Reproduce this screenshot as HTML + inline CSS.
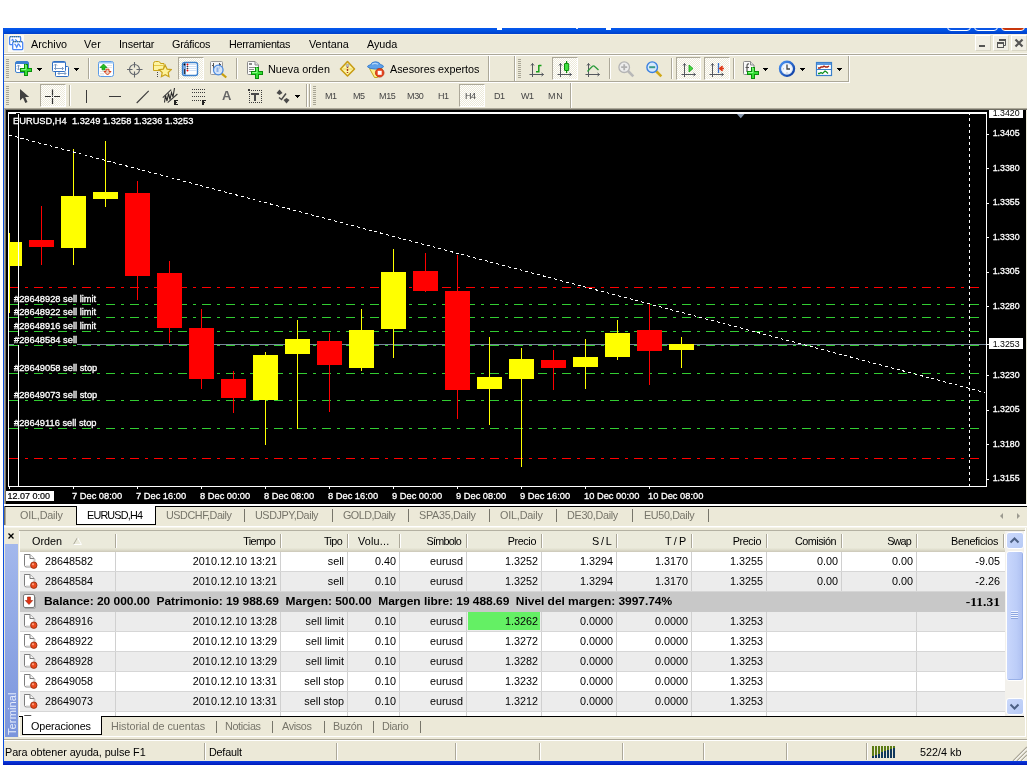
<!DOCTYPE html>
<html lang="es"><head><meta charset="utf-8"><title>MetaTrader 4 - EURUSD,H4</title>
<style>
html,body{margin:0;padding:0;background:#fff;}
body{width:1032px;height:765px;position:relative;overflow:hidden;font-family:"Liberation Sans",sans-serif;font-size:11px;color:#000;}
.a{position:absolute;}
.t{position:absolute;white-space:nowrap;line-height:13px;height:13px;font-size:11.5px;transform:scaleX(0.94);transform-origin:0 50%;}
#win{position:absolute;left:3px;top:28px;width:1024px;height:737px;background:#ece9d8;}
.sepv{position:absolute;width:1px;background:#aca899;border-right:1px solid #fff;}
.grip{position:absolute;width:3px;background:repeating-linear-gradient(to bottom,#a8a595 0,#a8a595 1px,#ece9d8 1px,#ece9d8 2px);}
.pressed{position:absolute;box-sizing:border-box;border:1px solid;border-color:#aca899 #fff #fff #aca899;background:#f6f5ee;}
.dd{position:absolute;width:0;height:0;border-left:3px solid transparent;border-right:3px solid transparent;border-top:3px solid #000;}
.tf{position:absolute;top:90px;font-size:9.5px;color:#444;line-height:12px;white-space:nowrap;transform:scaleX(0.947);transform-origin:0 50%;}
.ctab{position:absolute;top:509px;font-size:11.5px;transform:scaleX(0.94);transform-origin:0 50%;color:#77756a;line-height:13px;white-space:nowrap;}
.csep{position:absolute;top:509px;width:1px;height:13px;background:#77756a;}
.hd{position:absolute;top:535px;line-height:13px;white-space:nowrap;text-align:right;font-size:11.5px;transform:scaleX(0.94);transform-origin:100% 50%;}
.l{text-align:left !important;transform-origin:0 50% !important;}
.c{position:absolute;line-height:13px;white-space:nowrap;text-align:right;font-size:11.5px;transform:scaleX(0.94);transform-origin:100% 50%;}
.row{position:absolute;left:20px;width:985px;height:19px;border-bottom:1px solid #d4d4d4;}
.vl{position:absolute;width:1px;background:#d0d0d0;}
.btab{position:absolute;top:720px;font-size:11.5px;transform:scaleX(0.94);transform-origin:0 50%;color:#77756a;line-height:13px;white-space:nowrap;}
.bsep{position:absolute;top:721px;width:1px;height:12px;background:#77756a;}
.ssep{position:absolute;top:743px;width:1px;height:17px;background:#aca899;border-right:1px solid #fff;}
</style></head><body>
<div id="root" style="position:absolute;left:0;top:0;width:1032px;height:765px;will-change:transform;">
<div id="win"></div>
<div class="a" style="left:3px;top:28px;width:1024px;height:6px;background:linear-gradient(to bottom,#0558ee 0,#0050e0 50%,#003fca 100%);"></div>
<div class="a" style="left:3px;top:28px;width:1px;height:737px;background:#0a4fe0;"></div>
<div class="a" style="left:3px;top:761px;width:1024px;height:4px;background:linear-gradient(to bottom,#0a3ce0 0,#0019b8 100%);"></div>
<div class="a" style="left:947px;top:23px;width:24px;height:8px;border:1px solid #fff;border-radius:0 0 4px 4px;background:#0a55e4;box-sizing:border-box;"></div>
<div class="a" style="left:974px;top:23px;width:24px;height:8px;border:1px solid #fff;border-radius:0 0 4px 4px;background:#0a55e4;box-sizing:border-box;"></div>
<div class="a" style="left:1001px;top:23px;width:24px;height:8px;border:1px solid #fff;border-radius:0 0 4px 4px;background:#c8360c;box-sizing:border-box;"></div>
<div class="a" style="left:0;top:0;width:1032px;height:28px;background:#fff;"></div>
<div class="a" style="left:497px;top:28px;width:5px;height:2px;background:#fff;"></div>
<div class="a" style="left:606px;top:28px;width:5px;height:2px;background:#fff;"></div>
<div class="a" style="left:576px;top:28px;width:2px;height:1px;background:#dfe8fb;"></div>
<div class="a" style="left:4px;top:34px;width:1023px;height:1px;background:#f6f2e2;"></div>
<svg class="a" style="left:8px;top:35px" width="16" height="17" viewBox="0 0 16 17"><rect x="0" y="0" width="16" height="17" fill="#fafaf8"/><rect x="1.600" y="1.700" width="11" height="8" rx="1" fill="#fff" stroke="#4a86f4" stroke-width="1.300"/><path d="M2 1.700h10.500" stroke="#4a7a6a" stroke-width="1.300" stroke-dasharray="1 1"/><path d="M3.500 5.500l1.200-1 0.800 1.500M7 4.500l1.500 1 1 1.500" fill="none" stroke="#4a86f4" stroke-width="1.200"/><rect x="4.700" y="6.700" width="10" height="8" rx="1" fill="#fff" stroke="#4a86f4" stroke-width="1.300"/><path d="M5 6.700h9.500" stroke="#4a7a6a" stroke-width="1.300" stroke-dasharray="1 1"/><path d="M6.500 8.800l1 1 1.200 2.500 1.500-3.300 1.200 1 1.200 2.300" fill="none" stroke="#4a86f4" stroke-width="1.200"/></svg>
<div class="t" style="left:31px;top:38px;letter-spacing:0px;">Archivo</div>
<div class="t" style="left:84px;top:38px;letter-spacing:0.3px;">Ver</div>
<div class="t" style="left:119px;top:38px;letter-spacing:-0.19px;">Insertar</div>
<div class="t" style="left:172px;top:38px;letter-spacing:-0.27px;">Gráficos</div>
<div class="t" style="left:229px;top:38px;letter-spacing:-0.34px;">Herramientas</div>
<div class="t" style="left:309px;top:38px;letter-spacing:0px;">Ventana</div>
<div class="t" style="left:367px;top:38px;letter-spacing:-0.06px;">Ayuda</div>
<div class="a" style="left:975px;top:35px;width:16px;height:16px;box-sizing:border-box;border:1px solid;border-color:#fff #d8d5c4 #d8d5c4 #fff;background:#f0eee4;"></div>
<div class="a" style="left:993px;top:35px;width:16px;height:16px;box-sizing:border-box;border:1px solid;border-color:#fff #d8d5c4 #d8d5c4 #fff;background:#f0eee4;"></div>
<div class="a" style="left:1011px;top:35px;width:16px;height:16px;box-sizing:border-box;border:1px solid;border-color:#fff #d8d5c4 #d8d5c4 #fff;background:#f0eee4;"></div>
<div class="a" style="left:979px;top:45px;width:6px;height:2px;background:#555;"></div>
<svg class="a" style="left:993px;top:35px" width="16" height="16"><path d="M6.5 5.5h6v5h-2" fill="none" stroke="#555" stroke-width="1"/><rect x="6" y="4" width="7" height="2" fill="#555"/><rect x="4.500" y="8.5" width="6" height="4" fill="none" stroke="#555"/><rect x="4" y="7" width="7" height="2" fill="#555"/></svg>
<svg class="a" style="left:1011px;top:35px" width="16" height="16"><path d="M4.5 4.5l7 7M11.500 4.500l-7 7" stroke="#555" stroke-width="2.2"/></svg>
<div class="a" style="left:4px;top:54px;width:1023px;height:1px;background:#aca899;"></div>
<div class="a" style="left:4px;top:55px;width:1023px;height:1px;background:#fff;"></div>
<div class="a" style="left:4px;top:53px;width:1023px;height:1px;background:#fbfaf6;"></div>
<div class="a" style="left:4px;top:81px;width:845px;height:1px;background:#aca899;"></div>
<div class="a" style="left:4px;top:82px;width:846px;height:1px;background:#fff;"></div>
<div class="a" style="left:848px;top:56px;width:1px;height:26px;background:#aca899;"></div><div class="a" style="left:849px;top:56px;width:1px;height:27px;background:#fff;"></div>
<div class="grip" style="left:6px;top:59px;height:19px;"></div><svg class="a" style="left:14px;top:60px" width="20" height="18" viewBox="0 0 20 18"><rect x="1.5" y="1.5" width="13" height="11" rx="1.5" fill="#fff" stroke="#3b7fd0"/><rect x="2" y="2" width="12" height="2" fill="#3b7fd0"/><path d="M4.500 5v5M3 6.500l1.500-1.500 1.500 1.500M3 8.500l1.500 1.500 1.500-1.500" stroke="#7d9cc4" fill="none"/><path d="M10 4h4v4h4v4h-4v4h-4v-4h-4v-4h4z" fill="#0b8f0b"/><path d="M11 5h2v4h4v2h-4v4h-2v-4h-4v-2h4z" fill="#35dd35"/><path d="M11 5h1v4.500h-4.500v0.500" fill="none" stroke="#8cff8c" stroke-width="1"/></svg>
<svg class="a" style="left:37px;top:68px" width="5" height="3" shape-rendering="crispEdges"><rect x="0" y="0" width="5" height="1"/><rect x="1" y="1" width="3" height="1"/><rect x="2" y="2" width="1" height="1"/></svg><svg class="a" style="left:51px;top:60px" width="20" height="18" viewBox="0 0 20 18"><rect x="4.500" y="6.500" width="13" height="10" rx="1" fill="#fff" stroke="#2f6fc4"/><path d="M7 13.500h8M7 13.500l1.500-1.500M7 13.500l1.500 1.500M15 13.500l-1.500-1.500M15 13.500l-1.500 1.500" stroke="#7d9cc4" fill="none"/><rect x="1.500" y="1.500" width="13" height="10" rx="1" fill="#fff" stroke="#2f6fc4"/><rect x="2" y="2" width="12" height="0.800" fill="#2f6fc4"/><path d="M4.500 4v6M3 5.500l1.500-1.500 1.500 1.500M3 8.500h9.500M12.500 8.500l-1.500-1.500M12.500 8.500l-1.500 1.500" stroke="#7d9cc4" fill="none"/></svg>
<svg class="a" style="left:74px;top:68px" width="5" height="3" shape-rendering="crispEdges"><rect x="0" y="0" width="5" height="1"/><rect x="1" y="1" width="3" height="1"/><rect x="2" y="2" width="1" height="1"/></svg><div class="a" style="left:88px;top:58px;width:1px;height:21px;background:#aca899;"></div><div class="a" style="left:89px;top:58px;width:1px;height:21px;background:#fff;"></div>
<svg class="a" style="left:97px;top:60px" width="18" height="18" viewBox="0 0 18 18"><rect x="1.500" y="1.500" width="15" height="15" rx="2" fill="#fff" stroke="#5b9be6"/><rect x="2" y="2" width="14" height="1.500" fill="#9cc8f6"/><path d="M10 5.500h5M10 7.500h5M3 11.500h4M3 13.500h4M3 15h4" stroke="#e4e4e4"/><path d="M6.500 4l3.500 3.500h-2v2.300h-3v-2.300h-2z" fill="#22c022" stroke="#0c8a0c" stroke-width="0.700"/><path d="M10.500 15l-3.500-3.500h2v-2.300h3v2.300h2z" fill="#e8d0c0" stroke="#d8401c" stroke-width="1"/></svg>
<svg class="a" style="left:126px;top:61px" width="18" height="18" viewBox="0 0 18 18"><circle cx="8.500" cy="8.500" r="5" fill="none" stroke="#62666c" stroke-width="1.100"/><path d="M8.500 1v5.500M8.500 10.500v6M1 8.500h5.500M10.500 8.500h6" stroke="#62666c" stroke-width="1.100"/></svg>
<svg class="a" style="left:152px;top:60px" width="20" height="18" viewBox="0 0 20 18"><path d="M1.500 3.500q0-2 2-2h3q1.500 0 2 2h3.500v7h-10.500z" fill="#fdf3a2" stroke="#c9a21a"/><path d="M2 5.500h9.500" stroke="#e6c84a"/><path d="M5.500 12v1M5.500 14v1M5.500 16v1" stroke="#444"/><path d="M13.200 5.200l1.900 3.900 4.200 0.500-3.100 2.900 0.800 4.200-3.800-2.100-3.800 2.100 0.800-4.200-3.100-2.900 4.200-0.500z" fill="#fdf29a" stroke="#c9a21a" stroke-width="1.200"/></svg>
<div class="pressed" style="left:178px;top:57px;width:26px;height:23px;background-image:repeating-conic-gradient(#fff 0 25%,#ece9d8 0 50%);background-size:2px 2px;"></div>
<svg class="a" style="left:181px;top:61px" width="18" height="16" viewBox="0 0 18 16"><rect x="1.500" y="1.500" width="15" height="13" rx="2" fill="#fff" stroke="#3b80cc" stroke-width="1.400"/><rect x="2" y="2" width="3" height="12" fill="#7aa7e0"/><rect x="3" y="8" width="1.200" height="5" fill="#333"/><path d="M5 3.500h11M5 5.500h11M5 7.500h11M5 9.500h11" stroke="#cfe0f6"/><circle cx="3.500" cy="3.500" r="0.900" fill="#000"/><circle cx="6.500" cy="3.500" r="0.900" fill="#f00"/><circle cx="6.500" cy="5.500" r="0.800" fill="#333"/><circle cx="6.500" cy="7.500" r="0.800" fill="#333"/><circle cx="6.500" cy="9.500" r="0.900" fill="#f00"/></svg>
<svg class="a" style="left:209px;top:60px" width="20" height="19" viewBox="0 0 20 19"><rect x="1.500" y="1.500" width="12" height="13" rx="1" fill="#f4f4f4" stroke="#9a9a9a"/><path d="M4.500 3v7M3 5.500h1.500M10.500 3v6M10.500 4.500h1.500" stroke="#555"/><circle cx="9.300" cy="10" r="4.800" fill="#cfe0f8" fill-opacity="0.850" stroke="#4a8ae0" stroke-width="1.200"/><path d="M8.500 7.500v4.500" stroke="#8ab0e8" stroke-width="2"/><path d="M13 13.800l4.300 3.700" stroke="#c8a010" stroke-width="2.200"/></svg>
<div class="a" style="left:236px;top:58px;width:1px;height:21px;background:#aca899;"></div><div class="a" style="left:237px;top:58px;width:1px;height:21px;background:#fff;"></div>
<svg class="a" style="left:246px;top:60px" width="19" height="20" viewBox="0 0 19 20"><path d="M1.500 2.500q0-1 1-1h6.500l3.500 3.500v8.500q0 1-1 1h-9q-1 0-1-1z" fill="#fafafa" stroke="#8a8a8a"/><path d="M9 1.500v3.500h3.500" fill="#e0e0e0" stroke="#8a8a8a"/><rect x="3" y="3" width="3" height="2" fill="#8a8a8a"/><path d="M3 7.500h7M3 9.500h5M3 11.500h3" stroke="#8a8a8a"/><path d="M9 7h4v4h4v4h-4v4h-4v-4h-4v-4h4z" fill="#0b8f0b"/><path d="M10 8h2v4h4v2h-4v4h-2v-4h-4v-2h4z" fill="#35dd35"/><path d="M10 8h1v4.500h-4.500v0.500" fill="none" stroke="#8cff8c" stroke-width="1"/></svg>
<div class="t" style="left:268px;top:63px;">Nueva orden</div>
<svg class="a" style="left:339px;top:60px" width="18" height="18" viewBox="0 0 18 18"><path d="M8.500 1.500l7 7.500-7 7-7-7z" fill="#fdf6a6" stroke="#c89c14" stroke-width="1.600" stroke-linejoin="round"/><path d="M3.500 9h10" stroke="#e8d060"/><path d="M8.500 6v7" stroke="#a8301c" stroke-width="1.400" stroke-dasharray="2 1"/><circle cx="8.500" cy="5.500" r="1.400" fill="#c0c0c0" stroke="#888" stroke-width="0.500"/></svg>
<svg class="a" style="left:366px;top:59px" width="19" height="20" viewBox="0 0 19 20"><path d="M3.500 9.500h12.500v4l-4.500 5h-3z" fill="#fdf08a" stroke="#c9a21a"/><g transform="translate(0,0.800)"><path d="M1.500 7q0-1.500 3-2q1-3 5-3t5 2.800q3 0.500 3 2.200q-2 2.300-8 2.300t-8-2.300z" fill="#5ea2ea" stroke="#3a7fd0"/><path d="M6 4.500q3-1.800 6 0" stroke="#b4d6fa" stroke-width="1.300" fill="none"/></g><circle cx="13.700" cy="13.800" r="4.300" fill="#e8431c" stroke="#b83010" stroke-width="0.800"/><rect x="11.700" y="11.800" width="4" height="4" fill="#fff"/></svg>
<div class="t" style="left:390px;top:63px;">Asesores expertos</div>
<div class="a" style="left:488px;top:56px;width:1px;height:25px;background:#aca899;"></div><div class="a" style="left:489px;top:56px;width:1px;height:25px;background:#fff;"></div>
<div class="a" style="left:514px;top:56px;width:1px;height:25px;background:#aca899;"></div><div class="a" style="left:515px;top:56px;width:1px;height:25px;background:#fff;"></div>
<div class="grip" style="left:518px;top:59px;height:19px;"></div><svg class="a" style="left:527px;top:60px" width="20" height="19" viewBox="0 0 20 19"><path d="M5.5 3.500v13.500M4 5.500l1.500-2 1.500 2M2.5 14.500h14M14.5 13l2 1.500-2 1.500" stroke="#55585e" stroke-width="1" fill="none"/><path d="M11.800 5v7.500M11.800 5.500h2.700M9 11.800h2.800" stroke="#18a018" stroke-width="1.500" fill="none"/></svg>
<div class="pressed" style="left:552px;top:57px;width:26px;height:23px;background-image:repeating-conic-gradient(#fff 0 25%,#ece9d8 0 50%);background-size:2px 2px;"></div>
<svg class="a" style="left:555px;top:60px" width="20" height="19" viewBox="0 0 20 19"><path d="M5.5 3.500v13.500M4 5.500l1.500-2 1.500 2M2.5 14.500h14M14.5 13l2 1.500-2 1.500" stroke="#55585e" stroke-width="1" fill="none"/><path d="M11.600 1v12" stroke="#0c8c0c" stroke-width="1.200"/><rect x="9.500" y="3.500" width="4.200" height="7" rx="0.500" fill="#3fe03f" stroke="#0c8c0c"/></svg>
<svg class="a" style="left:583px;top:60px" width="20" height="19" viewBox="0 0 20 19"><path d="M5.5 3.500v13.500M4 5.500l1.500-2 1.500 2M2.5 14.500h14M14.5 13l2 1.500-2 1.500" stroke="#55585e" stroke-width="1" fill="none"/><path d="M4.500 11.500q3-3.500 5-5.300q1.200-0.800 2.500 0.500l3.500 3.300" stroke="#2a9a3a" stroke-width="1.300" fill="none"/></svg>
<div class="a" style="left:609px;top:58px;width:1px;height:21px;background:#aca899;"></div><div class="a" style="left:610px;top:58px;width:1px;height:21px;background:#fff;"></div>
<svg class="a" style="left:617px;top:60px" width="19" height="19" viewBox="0 0 19 19"><path d="M11 11l5.300 5.300" stroke="#b8b8b8" stroke-width="2.600"/><circle cx="7.200" cy="7.200" r="5.300" fill="#ececec" stroke="#b4b4b4" stroke-width="1.300"/><path d="M7.200 4.200v6M4.200 7.200h6" stroke="#b0b0b0" stroke-width="1.800"/></svg>
<svg class="a" style="left:645px;top:60px" width="19" height="19" viewBox="0 0 19 19"><path d="M11 11l5.300 5.300" stroke="#d0a818" stroke-width="2.600"/><circle cx="7.200" cy="7.200" r="5.300" fill="#d6e8fc" stroke="#3a80e0" stroke-width="1.400"/><path d="M4.200 7.200h6" stroke="#3a9a8a" stroke-width="2"/></svg>
<div class="a" style="left:671px;top:58px;width:1px;height:21px;background:#aca899;"></div><div class="a" style="left:672px;top:58px;width:1px;height:21px;background:#fff;"></div>
<div class="pressed" style="left:676px;top:57px;width:25px;height:23px;background-image:repeating-conic-gradient(#fff 0 25%,#ece9d8 0 50%);background-size:2px 2px;"></div>
<svg class="a" style="left:679px;top:60px" width="20" height="19" viewBox="0 0 20 19"><path d="M5.5 3.500v13.500M4 5.500l1.500-2 1.500 2M2.5 14.500h14M14.5 13l2 1.500-2 1.500" stroke="#55585e" stroke-width="1" fill="none"/><path d="M10 5l4 3.500-4 3.500z" fill="#3fd83f" stroke="#18a018" stroke-width="0.800"/></svg>
<div class="pressed" style="left:704px;top:57px;width:26px;height:23px;background-image:repeating-conic-gradient(#fff 0 25%,#ece9d8 0 50%);background-size:2px 2px;"></div>
<svg class="a" style="left:707px;top:60px" width="20" height="19" viewBox="0 0 20 19"><path d="M5.5 3.500v13.500M4 5.500l1.500-2 1.500 2M2.5 14.500h14M14.5 13l2 1.500-2 1.500" stroke="#55585e" stroke-width="1" fill="none"/><path d="M11.500 3v10" stroke="#3a6fc8" stroke-width="1.300"/><path d="M17 8.500h-4M15.500 6l-3 2.500 3 2.500" stroke="#e03818" stroke-width="1.300" fill="#e03818"/></svg>
<div class="a" style="left:733px;top:58px;width:1px;height:21px;background:#aca899;"></div><div class="a" style="left:734px;top:58px;width:1px;height:21px;background:#fff;"></div>
<svg class="a" style="left:742px;top:60px" width="19" height="20" viewBox="0 0 19 20"><path d="M1.500 2.500q0-1 1-1h6l3.500 3.500v8.500q0 1-1 1h-8.500q-1 0-1-1z" fill="#fafafa" stroke="#8a8a8a"/><path d="M8.500 1.500v3.500h3.500" fill="#e0e0e0" stroke="#8a8a8a"/><path d="M7 4q-2-0.500-2 2v6M3.500 7.500h3.500" stroke="#555" stroke-width="1.200" fill="none"/><path d="M9 7h4v4h4v4h-4v4h-4v-4h-4v-4h4z" fill="#0b8f0b"/><path d="M10 8h2v4h4v2h-4v4h-2v-4h-4v-2h4z" fill="#35dd35"/><path d="M10 8h1v4.500h-4.500v0.500" fill="none" stroke="#8cff8c" stroke-width="1"/></svg>
<svg class="a" style="left:763px;top:68px" width="5" height="3" shape-rendering="crispEdges"><rect x="0" y="0" width="5" height="1"/><rect x="1" y="1" width="3" height="1"/><rect x="2" y="2" width="1" height="1"/></svg><svg class="a" style="left:778px;top:60px" width="18" height="18" viewBox="0 0 18 18"><defs><linearGradient id="ck" x1="0" y1="0" x2="1" y2="1"><stop offset="0" stop-color="#4a94f4"/><stop offset="1" stop-color="#0a3aa0"/></linearGradient></defs><circle cx="9" cy="8.800" r="7" fill="#fff" stroke="url(#ck)" stroke-width="2.400"/><circle cx="9" cy="8.800" r="5.300" fill="#f4f8fe" stroke="#c8d8ee" stroke-width="0.600"/><path d="M9 4.500v4.500h3" stroke="#444" stroke-width="1.300" fill="none"/><path d="M9 12.500v0.800M5 8.800h0.800" stroke="#999"/></svg>
<svg class="a" style="left:800px;top:68px" width="5" height="3" shape-rendering="crispEdges"><rect x="0" y="0" width="5" height="1"/><rect x="1" y="1" width="3" height="1"/><rect x="2" y="2" width="1" height="1"/></svg><svg class="a" style="left:815px;top:61px" width="18" height="16" viewBox="0 0 18 16"><rect x="1.500" y="1.500" width="15" height="13" fill="#fff" stroke="#3b80cc" stroke-width="1.200"/><rect x="2" y="2" width="14" height="2" fill="#5b98e0"/><path d="M2 8.500h14" stroke="#3b80cc"/><path d="M3 7h2l1-1h2l1-1 1.500 1h2l1.500-1" stroke="#a82010" stroke-width="1.300" fill="none"/><path d="M3 12.500h1.500l1.500-1 1.500 1 2.500-2.500 1.500 1 1.500 1.500" stroke="#109020" stroke-width="1.300" fill="none"/></svg>
<svg class="a" style="left:837px;top:68px" width="5" height="3" shape-rendering="crispEdges"><rect x="0" y="0" width="5" height="1"/><rect x="1" y="1" width="3" height="1"/><rect x="2" y="2" width="1" height="1"/></svg><div class="grip" style="left:6px;top:86px;height:19px;"></div><svg class="a" style="left:19px;top:88px" width="11" height="16" viewBox="0 0 11 16"><path d="M1 1v11.500l3-2.800 2.300 5.300 2.200-1-2.300-5h4z" fill="#404040"/></svg>
<div class="pressed" style="left:40px;top:84px;width:26px;height:23px;background-image:repeating-conic-gradient(#fff 0 25%,#ece9d8 0 50%);background-size:2px 2px;"></div>
<svg class="a" style="left:44px;top:88px" width="18" height="18" viewBox="0 0 18 18"><path d="M8.500 1.500v6M8.500 10v6M1 8.500h6M10 8.500h6" stroke="#333" stroke-width="1.200"/><rect x="8" y="8" width="1" height="1" fill="#333"/></svg>
<div class="a" style="left:69px;top:85px;width:1px;height:21px;background:#aca899;"></div><div class="a" style="left:70px;top:85px;width:1px;height:21px;background:#fff;"></div>
<div class="a" style="left:86px;top:90px;width:1px;height:13px;background:#3a3a3a;"></div><div class="a" style="left:109px;top:96px;width:12px;height:1px;background:#3a3a3a;"></div>
<svg class="a" style="left:135px;top:89px" width="16" height="16" viewBox="0 0 16 16"><path d="M1.700 14l12-12.200" stroke="#3a3a3a" stroke-width="1.100"/></svg>
<svg class="a" style="left:161px;top:87px" width="19" height="19" viewBox="0 0 19 19"><path d="M1.800 10.600l8.400-7.900M6.700 15.700l9.700-8.700" stroke="#3a3a3a" stroke-width="1.100"/><path d="M3.500 15.500l1-7 1.500 5.500 1.500-7.500 1.500 6 1.500-7 1.500 4.500 1.500-9" stroke="#2a2a2a" stroke-width="1.100" fill="none"/><g shape-rendering="crispEdges" fill="#222"><rect x="13" y="13" width="1.500" height="5"/><rect x="13" y="13" width="4" height="1"/><rect x="13" y="15" width="3" height="1"/><rect x="13" y="17" width="4" height="1"/></g></svg>
<svg class="a" style="left:191px;top:87px" width="17" height="19" viewBox="0 0 17 19"><g shape-rendering="crispEdges" fill="#3a3a3a"><rect x="1" y="2" width="1" height="1"/><rect x="3" y="2" width="1" height="1"/><rect x="5" y="2" width="1" height="1"/><rect x="7" y="2" width="1" height="1"/><rect x="9" y="2" width="1" height="1"/><rect x="11" y="2" width="1" height="1"/><rect x="13" y="2" width="1" height="1"/><rect x="1" y="5" width="1" height="1"/><rect x="3" y="5" width="1" height="1"/><rect x="5" y="5" width="1" height="1"/><rect x="7" y="5" width="1" height="1"/><rect x="9" y="5" width="1" height="1"/><rect x="11" y="5" width="1" height="1"/><rect x="13" y="5" width="1" height="1"/><rect x="1" y="9" width="1" height="1"/><rect x="3" y="9" width="1" height="1"/><rect x="5" y="9" width="1" height="1"/><rect x="7" y="9" width="1" height="1"/><rect x="9" y="9" width="1" height="1"/><rect x="11" y="9" width="1" height="1"/><rect x="13" y="9" width="1" height="1"/><rect x="1" y="13" width="1" height="1"/><rect x="3" y="13" width="1" height="1"/><rect x="5" y="13" width="1" height="1"/><rect x="7" y="13" width="1" height="1"/><rect x="9" y="13" width="1" height="1"/></g><g shape-rendering="crispEdges" fill="#222"><rect x="11" y="13" width="1.500" height="5"/><rect x="11" y="13" width="4" height="1"/><rect x="11" y="15" width="3" height="1"/></g></svg>
<div class="a" style="left:222px;top:88px;font-size:13px;font-weight:bold;color:#666;line-height:15px;">A</div>
<svg class="a" style="left:247px;top:88px" width="16" height="16" viewBox="0 0 16 16"><g shape-rendering="crispEdges" fill="#3a3a3a"><rect x="2" y="2" width="1" height="1"/><rect x="2" y="14" width="1" height="1"/><rect x="2" y="2" width="1" height="1"/><rect x="14" y="2" width="1" height="1"/><rect x="4" y="2" width="1" height="1"/><rect x="4" y="14" width="1" height="1"/><rect x="2" y="4" width="1" height="1"/><rect x="14" y="4" width="1" height="1"/><rect x="6" y="2" width="1" height="1"/><rect x="6" y="14" width="1" height="1"/><rect x="2" y="6" width="1" height="1"/><rect x="14" y="6" width="1" height="1"/><rect x="8" y="2" width="1" height="1"/><rect x="8" y="14" width="1" height="1"/><rect x="2" y="8" width="1" height="1"/><rect x="14" y="8" width="1" height="1"/><rect x="10" y="2" width="1" height="1"/><rect x="10" y="14" width="1" height="1"/><rect x="2" y="10" width="1" height="1"/><rect x="14" y="10" width="1" height="1"/><rect x="12" y="2" width="1" height="1"/><rect x="12" y="14" width="1" height="1"/><rect x="2" y="12" width="1" height="1"/><rect x="14" y="12" width="1" height="1"/><rect x="14" y="2" width="1" height="1"/><rect x="14" y="14" width="1" height="1"/><rect x="2" y="14" width="1" height="1"/><rect x="14" y="14" width="1" height="1"/><rect x="1" y="1" width="2" height="2"/><rect x="4" y="5" width="8" height="2" fill="#4a4a4a"/><rect x="7" y="5" width="2" height="8" fill="#4a4a4a"/></g></svg>
<svg class="a" style="left:275px;top:88px" width="17" height="17" viewBox="0 0 17 17"><path d="M4.500 1.500l3 3.500h-6zM1.500 5h6l-3 2z" fill="#4a4a4a"/><path d="M11.500 15.500l3-3.500h-6zM8.500 12h6l-3-2z" fill="#4a4a4a"/><path d="M4 9.500l2.500 2 4.500-6" stroke="#4a4a4a" stroke-width="1.500" fill="none"/></svg>
<svg class="a" style="left:295px;top:95px" width="5" height="3" shape-rendering="crispEdges"><rect x="0" y="0" width="5" height="1"/><rect x="1" y="1" width="3" height="1"/><rect x="2" y="2" width="1" height="1"/></svg><div class="a" style="left:306px;top:84px;width:1px;height:23px;background:#aca899;"></div><div class="a" style="left:307px;top:84px;width:1px;height:23px;background:#fff;"></div><div class="a" style="left:309px;top:84px;width:1px;height:23px;background:#aca899;"></div><div class="a" style="left:310px;top:84px;width:1px;height:23px;background:#fff;"></div>
<div class="grip" style="left:313px;top:86px;height:19px;"></div><div class="pressed" style="left:459px;top:84px;width:26px;height:23px;background-image:repeating-conic-gradient(#fff 0 25%,#ece9d8 0 50%);background-size:2px 2px;"></div>
<div class="tf" style="left:325px;letter-spacing:-0.63px;">M1</div><div class="tf" style="left:353px;letter-spacing:-0.63px;">M5</div><div class="tf" style="left:379px;letter-spacing:-0.33px;">M15</div><div class="tf" style="left:407px;letter-spacing:-0.33px;">M30</div><div class="tf" style="left:438px;letter-spacing:-0.44px;">H1</div><div class="tf" style="left:465px;letter-spacing:-0.44px;">H4</div><div class="tf" style="left:494px;letter-spacing:-0.44px;">D1</div><div class="tf" style="left:521px;letter-spacing:-0.5px;">W1</div><div class="tf" style="left:548px;letter-spacing:0.7px;">MN</div>
<div class="a" style="left:570px;top:83px;width:1px;height:25px;background:#aca899;"></div><div class="a" style="left:571px;top:83px;width:1px;height:25px;background:#fff;"></div>
<div class="a" style="left:4px;top:108px;width:1023px;height:1px;background:#aca899;"></div>
<div class="a" style="left:4px;top:109px;width:1023px;height:1px;background:#716f64;"></div>
<div class="a" style="left:4px;top:108px;width:1px;height:397px;background:#aca899;"></div>
<div class="a" style="left:5px;top:109px;width:1px;height:396px;background:#716f64;"></div>
<svg class="a" style="left:6px;top:110px;" width="1020" height="394" viewBox="6 110 1020 394" shape-rendering="crispEdges" font-family="'Liberation Sans',sans-serif" font-size="9.3px">
<rect x="6" y="110" width="1020" height="394" fill="#000"/>
<rect x="9" y="287" width="9" height="1" fill="#ff0000"/><line x1="19" x2="979" y1="287.5" y2="287.5" stroke="#ff0000" stroke-width="1" stroke-dasharray="9 6 3 6" stroke-dashoffset="9"/>
<rect x="9" y="458" width="9" height="1" fill="#ff0000"/><line x1="19" x2="979" y1="458.5" y2="458.5" stroke="#ff0000" stroke-width="1" stroke-dasharray="9 6 3 6" stroke-dashoffset="9"/>
<rect x="9" y="304" width="9" height="1" fill="#32cd32"/><line x1="19" x2="979" y1="304.5" y2="304.5" stroke="#32cd32" stroke-width="1" stroke-dasharray="9 6 3 6" stroke-dashoffset="9"/>
<rect x="9" y="317" width="9" height="1" fill="#32cd32"/><line x1="19" x2="979" y1="317.5" y2="317.5" stroke="#32cd32" stroke-width="1" stroke-dasharray="9 6 3 6" stroke-dashoffset="9"/>
<rect x="9" y="331" width="9" height="1" fill="#32cd32"/><line x1="19" x2="979" y1="331.5" y2="331.5" stroke="#32cd32" stroke-width="1" stroke-dasharray="9 6 3 6" stroke-dashoffset="9"/>
<rect x="9" y="345" width="9" height="1" fill="#32cd32"/><line x1="19" x2="979" y1="345.5" y2="345.5" stroke="#32cd32" stroke-width="1" stroke-dasharray="9 6 3 6" stroke-dashoffset="9"/>
<rect x="9" y="373" width="9" height="1" fill="#32cd32"/><line x1="19" x2="979" y1="373.5" y2="373.5" stroke="#32cd32" stroke-width="1" stroke-dasharray="9 6 3 6" stroke-dashoffset="9"/>
<rect x="9" y="400" width="9" height="1" fill="#32cd32"/><line x1="19" x2="979" y1="400.5" y2="400.5" stroke="#32cd32" stroke-width="1" stroke-dasharray="9 6 3 6" stroke-dashoffset="9"/>
<rect x="9" y="428" width="9" height="1" fill="#32cd32"/><line x1="19" x2="979" y1="428.5" y2="428.5" stroke="#32cd32" stroke-width="1" stroke-dasharray="9 6 3 6" stroke-dashoffset="9"/>
<rect x="9" y="344" width="977" height="1" fill="#778899"/>
<rect x="9" y="233" width="1" height="80" fill="#ffff00"/><rect x="9" y="242" width="13" height="24" fill="#ffff00"/>
<rect x="41" y="206" width="1" height="59" fill="#ff0000"/><rect x="29" y="240" width="25" height="7" fill="#ff0000"/>
<rect x="73" y="149" width="1" height="116" fill="#ffff00"/><rect x="61" y="196" width="25" height="52" fill="#ffff00"/>
<rect x="105" y="141" width="1" height="66" fill="#ffff00"/><rect x="93" y="192" width="25" height="7" fill="#ffff00"/>
<rect x="137" y="181" width="1" height="119" fill="#ff0000"/><rect x="125" y="193" width="25" height="83" fill="#ff0000"/>
<rect x="169" y="261" width="1" height="82" fill="#ff0000"/><rect x="157" y="273" width="25" height="55" fill="#ff0000"/>
<rect x="201" y="309" width="1" height="80" fill="#ff0000"/><rect x="189" y="328" width="25" height="51" fill="#ff0000"/>
<rect x="233" y="371" width="1" height="42" fill="#ff0000"/><rect x="221" y="379" width="25" height="19" fill="#ff0000"/>
<rect x="265" y="352" width="1" height="93" fill="#ffff00"/><rect x="253" y="355" width="25" height="45" fill="#ffff00"/>
<rect x="297" y="320" width="1" height="109" fill="#ffff00"/><rect x="285" y="339" width="25" height="15" fill="#ffff00"/>
<rect x="329" y="333" width="1" height="79" fill="#ff0000"/><rect x="317" y="341" width="25" height="24" fill="#ff0000"/>
<rect x="361" y="309" width="1" height="62" fill="#ffff00"/><rect x="349" y="330" width="25" height="38" fill="#ffff00"/>
<rect x="393" y="249" width="1" height="109" fill="#ffff00"/><rect x="381" y="272" width="25" height="57" fill="#ffff00"/>
<rect x="425" y="253" width="1" height="39" fill="#ff0000"/><rect x="413" y="271" width="25" height="20" fill="#ff0000"/>
<rect x="457" y="255" width="1" height="164" fill="#ff0000"/><rect x="445" y="291" width="25" height="99" fill="#ff0000"/>
<rect x="489" y="337" width="1" height="88" fill="#ffff00"/><rect x="477" y="377" width="25" height="12" fill="#ffff00"/>
<rect x="521" y="348" width="1" height="119" fill="#ffff00"/><rect x="509" y="359" width="25" height="20" fill="#ffff00"/>
<rect x="553" y="350" width="1" height="40" fill="#ff0000"/><rect x="541" y="360" width="25" height="8" fill="#ff0000"/>
<rect x="585" y="339" width="1" height="50" fill="#ffff00"/><rect x="573" y="357" width="25" height="10" fill="#ffff00"/>
<rect x="617" y="320" width="1" height="40" fill="#ffff00"/><rect x="605" y="333" width="25" height="24" fill="#ffff00"/>
<rect x="649" y="304" width="1" height="81" fill="#ff0000"/><rect x="637" y="330" width="25" height="21" fill="#ff0000"/>
<rect x="681" y="337" width="1" height="31" fill="#ffff00"/><rect x="669" y="344" width="25" height="6" fill="#ffff00"/>
<line x1="9" y1="135" x2="985" y2="392.5" stroke="#fff" stroke-width="1" stroke-dasharray="3 3"/>
<rect x="8" y="112" width="979" height="2" fill="#fff"/>
<rect x="8" y="112" width="1" height="375" fill="#fff"/>
<rect x="986" y="112" width="1" height="375" fill="#fff"/>
<rect x="8" y="486" width="979" height="1" fill="#fff"/>
<rect x="18" y="114" width="1" height="373" fill="#fff"/>
<rect x="16" y="113" width="4" height="1" fill="#000"/>
<line x1="969.5" x2="969.5" y1="112" y2="486" stroke="#fff" stroke-width="1" stroke-dasharray="3 3"/>
<path d="M737 114h7.500l-3.750 4.200z" fill="#8494aa" shape-rendering="auto"/>
<rect x="9" y="486" width="1" height="3" fill="#fff"/><rect x="73" y="486" width="1" height="3" fill="#fff"/><rect x="137" y="486" width="1" height="3" fill="#fff"/><rect x="201" y="486" width="1" height="3" fill="#fff"/><rect x="265" y="486" width="1" height="3" fill="#fff"/><rect x="329" y="486" width="1" height="3" fill="#fff"/><rect x="393" y="486" width="1" height="3" fill="#fff"/><rect x="457" y="486" width="1" height="3" fill="#fff"/><rect x="521" y="486" width="1" height="3" fill="#fff"/><rect x="585" y="486" width="1" height="3" fill="#fff"/><rect x="649" y="486" width="1" height="3" fill="#fff"/>
<rect x="987" y="134" width="2" height="1" fill="#fff"/><text x="992.700" y="136.1" fill="#fff" stroke="#fff" stroke-width="0.3" font-size="8.800px">1.3405</text>
<rect x="987" y="168" width="2" height="1" fill="#fff"/><text x="992.700" y="170.6" fill="#fff" stroke="#fff" stroke-width="0.3" font-size="8.800px">1.3380</text>
<rect x="987" y="203" width="2" height="1" fill="#fff"/><text x="992.700" y="205.1" fill="#fff" stroke="#fff" stroke-width="0.3" font-size="8.800px">1.3355</text>
<rect x="987" y="237" width="2" height="1" fill="#fff"/><text x="992.700" y="239.6" fill="#fff" stroke="#fff" stroke-width="0.3" font-size="8.800px">1.3330</text>
<rect x="987" y="272" width="2" height="1" fill="#fff"/><text x="992.700" y="274.1" fill="#fff" stroke="#fff" stroke-width="0.3" font-size="8.800px">1.3305</text>
<rect x="987" y="306" width="2" height="1" fill="#fff"/><text x="992.700" y="308.6" fill="#fff" stroke="#fff" stroke-width="0.3" font-size="8.800px">1.3280</text>
<rect x="987" y="375" width="2" height="1" fill="#fff"/><text x="992.700" y="377.6" fill="#fff" stroke="#fff" stroke-width="0.3" font-size="8.800px">1.3230</text>
<rect x="987" y="410" width="2" height="1" fill="#fff"/><text x="992.700" y="412.1" fill="#fff" stroke="#fff" stroke-width="0.3" font-size="8.800px">1.3205</text>
<rect x="987" y="444" width="2" height="1" fill="#fff"/><text x="992.700" y="446.6" fill="#fff" stroke="#fff" stroke-width="0.3" font-size="8.800px">1.3180</text>
<rect x="987" y="479" width="2" height="1" fill="#fff"/><text x="992.700" y="481.1" fill="#fff" stroke="#fff" stroke-width="0.3" font-size="8.800px">1.3155</text>
<rect x="989" y="110" width="34" height="8" fill="#fff"/><text x="992.700" y="115.800" fill="#000" font-size="8.800px">1.3420</text>
<rect x="987" y="344" width="2" height="1" fill="#fff"/><rect x="989" y="338" width="34" height="11" fill="#fff"/><text x="992.700" y="346.900" fill="#000" font-size="8.800px">1.3253</text>
<text x="13" y="124" fill="#fff" stroke="#fff" stroke-width="0.3">EURUSD,H4&#160; 1.3249 1.3258 1.3236 1.3253</text>
<text x="14" y="302" fill="#fff" stroke="#fff" stroke-width="0.3">#28648928 sell limit</text>
<text x="14" y="315" fill="#fff" stroke="#fff" stroke-width="0.3">#28648922 sell limit</text>
<text x="14" y="329" fill="#fff" stroke="#fff" stroke-width="0.3">#28648916 sell limit</text>
<rect x="14" y="336" width="63" height="9" fill="#000"/><text x="14" y="342.5" fill="#fff" stroke="#fff" stroke-width="0.3">#28648584 sell</text>
<text x="14" y="370.5" fill="#fff" stroke="#fff" stroke-width="0.3">#28649058 sell stop</text>
<text x="14" y="397.5" fill="#fff" stroke="#fff" stroke-width="0.3">#28649073 sell stop</text>
<text x="14" y="425.5" fill="#fff" stroke="#fff" stroke-width="0.3">#28649116 sell stop</text>
<rect x="6" y="491" width="48" height="10" fill="#fff"/><text x="7.500" y="499" fill="#000" font-size="9px" stroke="#000" stroke-width="0.2">12.07 0:00</text>
<text x="72" y="499" fill="#fff" stroke="#fff" stroke-width="0.3">7 Dec 08:00</text><text x="136" y="499" fill="#fff" stroke="#fff" stroke-width="0.3">7 Dec 16:00</text><text x="200" y="499" fill="#fff" stroke="#fff" stroke-width="0.3">8 Dec 00:00</text><text x="264" y="499" fill="#fff" stroke="#fff" stroke-width="0.3">8 Dec 08:00</text><text x="328" y="499" fill="#fff" stroke="#fff" stroke-width="0.3">8 Dec 16:00</text><text x="392" y="499" fill="#fff" stroke="#fff" stroke-width="0.3">9 Dec 00:00</text><text x="456" y="499" fill="#fff" stroke="#fff" stroke-width="0.3">9 Dec 08:00</text><text x="520" y="499" fill="#fff" stroke="#fff" stroke-width="0.3">9 Dec 16:00</text><text x="584" y="499" fill="#fff" stroke="#fff" stroke-width="0.3">10 Dec 00:00</text><text x="648" y="499" fill="#fff" stroke="#fff" stroke-width="0.3">10 Dec 08:00</text>
</svg>
<div class="a" style="left:4px;top:504px;width:1023px;height:2px;background:#fff;"></div>
<div class="a" style="left:4px;top:506px;width:1023px;height:1px;background:#000;"></div>
<div class="a" style="left:4px;top:506px;width:1px;height:19px;background:#716f64;"></div>
<div class="a" style="left:5px;top:507px;width:1px;height:18px;background:#aca899;"></div>
<div class="a" style="left:4px;top:526px;width:1023px;height:1px;background:#fff;"></div><div class="a" style="left:4px;top:527px;width:1023px;height:1px;background:#f6f4ea;"></div>

<div class="a" style="left:76px;top:504px;width:80px;height:3px;background:#fff;"></div><div class="a" style="left:76px;top:506px;width:80px;height:19px;background:#fff;box-sizing:border-box;border:1px solid #000;border-top:none;"></div>
<div class="ctab" style="left:87px;color:#000;letter-spacing:-0.87px;">EURUSD,H4</div>
<div class="ctab" style="left:20px;letter-spacing:-0.2px;">OIL,Daily</div><div class="ctab" style="left:166px;letter-spacing:-0.49px;">USDCHF,Daily</div><div class="ctab" style="left:255px;letter-spacing:-0.46px;">USDJPY,Daily</div><div class="ctab" style="left:343px;letter-spacing:-0.59px;">GOLD,Daily</div><div class="ctab" style="left:419px;letter-spacing:-0.31px;">SPA35,Daily</div><div class="ctab" style="left:500px;letter-spacing:-0.2px;">OIL,Daily</div><div class="ctab" style="left:567px;letter-spacing:-0.34px;">DE30,Daily</div><div class="ctab" style="left:644px;letter-spacing:-0.4px;">EU50,Daily</div>
<div class="csep" style="left:244px;"></div><div class="csep" style="left:332px;"></div><div class="csep" style="left:408px;"></div><div class="csep" style="left:489px;"></div><div class="csep" style="left:556px;"></div><div class="csep" style="left:632px;"></div><div class="csep" style="left:708px;"></div>
<div class="a" style="left:1000px;top:513px;width:0;height:0;border-top:3px solid transparent;border-bottom:3px solid transparent;border-right:3px solid #9c9a90;"></div><div class="a" style="left:1017px;top:513px;width:0;height:0;border-top:3px solid transparent;border-bottom:3px solid transparent;border-left:3px solid #9c9a90;"></div>
<svg class="a" style="left:8px;top:533px" width="7" height="6"><path d="M0.5 0.500l5 5M5.500 0.500l-5 5" stroke="#000" stroke-width="1.300"/></svg>
<div class="a" style="left:5px;top:544px;width:13px;height:193px;background:linear-gradient(to bottom,#a3b8ec 0,#8ea6e4 50%,#7b95dc 100%);"></div>
<div class="a" style="left:5px;top:680px;width:13px;height:55px;"><div style="position:absolute;left:0.500px;top:54.500px;transform-origin:0 0;transform:rotate(-90deg);font-size:11px;line-height:13px;color:#e6ecfb;white-space:nowrap;letter-spacing:0.12px;">Terminal</div></div>
<div class="a" style="left:19px;top:530px;width:1005px;height:186px;background:#fff;"></div>
<div class="a" style="left:20px;top:531px;width:985px;height:21px;background:linear-gradient(to bottom,#ebeadb 0,#ebeadb 80%,#dedccb 90%,#cbc7b8 100%);"></div>
<div class="hd l" style="left:32px;">Orden</div><svg class="a" style="left:73px;top:537px" width="10" height="9"><path d="M0.5 7.500L4.500 0.500" stroke="#aca899" fill="none"/><path d="M4.500 0.500L8.500 7.500H0.500" stroke="#fff" fill="none"/></svg><div class="a" style="left:115px;top:534px;width:1px;height:14px;background:#aca899;border-right:1px solid #fff;"></div>
<div class="hd" style="left:115px;width:160px;letter-spacing:-0.7px;">Tiempo</div><div class="a" style="left:280px;top:534px;width:1px;height:14px;background:#aca899;border-right:1px solid #fff;"></div>
<div class="hd" style="left:280px;width:62px;letter-spacing:-0.7px;">Tipo</div><div class="a" style="left:347px;top:534px;width:1px;height:14px;background:#aca899;border-right:1px solid #fff;"></div>
<div class="hd l" style="left:358px;letter-spacing:0.2px;">Volu...</div><div class="a" style="left:399px;top:534px;width:1px;height:14px;background:#aca899;border-right:1px solid #fff;"></div>
<div class="hd" style="left:399px;width:62px;letter-spacing:-0.8px;">Símbolo</div><div class="a" style="left:466px;top:534px;width:1px;height:14px;background:#aca899;border-right:1px solid #fff;"></div>
<div class="hd" style="left:466px;width:70px;letter-spacing:-0.42px;">Precio</div><div class="a" style="left:541px;top:534px;width:1px;height:14px;background:#aca899;border-right:1px solid #fff;"></div>
<div class="hd" style="left:541px;width:70px;letter-spacing:-0.7px;">S / L</div><div class="a" style="left:616px;top:534px;width:1px;height:14px;background:#aca899;border-right:1px solid #fff;"></div>
<div class="hd" style="left:616px;width:70px;letter-spacing:-0.33px;">T / P</div><div class="a" style="left:691px;top:534px;width:1px;height:14px;background:#aca899;border-right:1px solid #fff;"></div>
<div class="hd" style="left:691px;width:70px;letter-spacing:-0.42px;">Precio</div><div class="a" style="left:766px;top:534px;width:1px;height:14px;background:#aca899;border-right:1px solid #fff;"></div>
<div class="hd" style="left:766px;width:70px;letter-spacing:-0.54px;">Comisión</div><div class="a" style="left:841px;top:534px;width:1px;height:14px;background:#aca899;border-right:1px solid #fff;"></div>
<div class="hd" style="left:841px;width:70px;letter-spacing:-0.86px;">Swap</div><div class="a" style="left:916px;top:534px;width:1px;height:14px;background:#aca899;border-right:1px solid #fff;"></div>
<div class="hd" style="left:916px;width:82px;letter-spacing:-0.31px;">Beneficios</div><div class="a" style="left:1003px;top:534px;width:1px;height:14px;background:#aca899;border-right:1px solid #fff;"></div>
<div class="a" style="left:20px;top:552px;width:985px;height:19px;background:#fff;border-bottom:1px solid #d6d6d6;"></div><div class="vl" style="left:115px;top:552px;height:19px;"></div><div class="vl" style="left:280px;top:552px;height:19px;"></div><div class="vl" style="left:347px;top:552px;height:19px;"></div><div class="vl" style="left:399px;top:552px;height:19px;"></div><div class="vl" style="left:466px;top:552px;height:19px;"></div><div class="vl" style="left:541px;top:552px;height:19px;"></div><div class="vl" style="left:616px;top:552px;height:19px;"></div><div class="vl" style="left:691px;top:552px;height:19px;"></div><div class="vl" style="left:766px;top:552px;height:19px;"></div><div class="vl" style="left:841px;top:552px;height:19px;"></div><div class="vl" style="left:916px;top:552px;height:19px;"></div><svg class="a" style="left:23px;top:553px" width="15" height="16" viewBox="0 0 15 16"><path d="M1.500 1.500h5.500l4 4v7q0 1-1 1h-7.500q-1 0-1-1v-10q0-1 1-1z" fill="#fff" stroke="#7d7d7d"/><path d="M3 13l7.500 0 0-7" fill="none" stroke="#e2e2e2" stroke-width="1.500"/><path d="M7 1.500v4h4" fill="#f4f4f4" stroke="#7d7d7d"/><path d="M2.500 14.500h8.500q1 0 1-1v-7.500" fill="none" stroke="#c8c8c8"/><circle cx="10.800" cy="12.200" r="3.200" fill="#ea4a1e" stroke="#9a3010" stroke-width="0.900"/><circle cx="10" cy="11.300" r="1.100" fill="#f8a080"/></svg><div class="c l" style="left:45px;top:555px;">28648582</div><div class="c" style="left:115px;top:555px;width:162px;">2010.12.10 13:21</div><div class="c" style="left:280px;top:555px;width:64px;">sell</div><div class="c" style="left:347px;top:555px;width:49px;">0.40</div><div class="c" style="left:399px;top:555px;width:64px;">eurusd</div><div class="c" style="left:466px;top:555px;width:72px;">1.3252</div><div class="c" style="left:541px;top:555px;width:72px;">1.3294</div><div class="c" style="left:616px;top:555px;width:72px;">1.3170</div><div class="c" style="left:691px;top:555px;width:72px;">1.3255</div><div class="c" style="left:766px;top:555px;width:72px;">0.00</div><div class="c" style="left:841px;top:555px;width:72px;">0.00</div><div class="c" style="left:916px;top:555px;width:84px;">-9.05</div>
<div class="a" style="left:20px;top:572px;width:985px;height:19px;background:#ececec;border-bottom:1px solid #d6d6d6;"></div><div class="vl" style="left:115px;top:572px;height:19px;"></div><div class="vl" style="left:280px;top:572px;height:19px;"></div><div class="vl" style="left:347px;top:572px;height:19px;"></div><div class="vl" style="left:399px;top:572px;height:19px;"></div><div class="vl" style="left:466px;top:572px;height:19px;"></div><div class="vl" style="left:541px;top:572px;height:19px;"></div><div class="vl" style="left:616px;top:572px;height:19px;"></div><div class="vl" style="left:691px;top:572px;height:19px;"></div><div class="vl" style="left:766px;top:572px;height:19px;"></div><div class="vl" style="left:841px;top:572px;height:19px;"></div><div class="vl" style="left:916px;top:572px;height:19px;"></div><svg class="a" style="left:23px;top:573px" width="15" height="16" viewBox="0 0 15 16"><path d="M1.500 1.500h5.500l4 4v7q0 1-1 1h-7.500q-1 0-1-1v-10q0-1 1-1z" fill="#fff" stroke="#7d7d7d"/><path d="M3 13l7.500 0 0-7" fill="none" stroke="#e2e2e2" stroke-width="1.500"/><path d="M7 1.500v4h4" fill="#f4f4f4" stroke="#7d7d7d"/><path d="M2.500 14.500h8.500q1 0 1-1v-7.500" fill="none" stroke="#c8c8c8"/><circle cx="10.800" cy="12.200" r="3.200" fill="#ea4a1e" stroke="#9a3010" stroke-width="0.900"/><circle cx="10" cy="11.300" r="1.100" fill="#f8a080"/></svg><div class="c l" style="left:45px;top:575px;">28648584</div><div class="c" style="left:115px;top:575px;width:162px;">2010.12.10 13:21</div><div class="c" style="left:280px;top:575px;width:64px;">sell</div><div class="c" style="left:347px;top:575px;width:49px;">0.10</div><div class="c" style="left:399px;top:575px;width:64px;">eurusd</div><div class="c" style="left:466px;top:575px;width:72px;">1.3252</div><div class="c" style="left:541px;top:575px;width:72px;">1.3294</div><div class="c" style="left:616px;top:575px;width:72px;">1.3170</div><div class="c" style="left:691px;top:575px;width:72px;">1.3255</div><div class="c" style="left:766px;top:575px;width:72px;">0.00</div><div class="c" style="left:841px;top:575px;width:72px;">0.00</div><div class="c" style="left:916px;top:575px;width:84px;">-2.26</div>
<div class="a" style="left:20px;top:592px;width:985px;height:20px;background:#c8c8c8;"></div><svg class="a" style="left:23px;top:594px" width="14" height="15" viewBox="0 0 14 15"><rect x="0.500" y="0.500" width="11" height="13" rx="1.500" fill="#fff" stroke="#7a7a7a"/><path d="M2 14.500h9q1.500 0 1.500-1.500v-10" fill="none" stroke="#a8a8a8"/><path d="M4.500 3h3v3.500h2.200L6 10.500 2.300 6.500h2.200z" fill="#e03010" stroke="#a02008" stroke-width="0.600"/></svg><div class="c l" style="left:44px;top:595px;font-weight:bold;font-size:11.5px;transform:scaleX(1.043);letter-spacing:-0.04px;">Balance: 20 000.00&#160; Patrimonio: 19 988.69&#160; Margen: 500.00&#160; Margen libre: 19 488.69&#160; Nivel del margen: 3997.74%</div><div class="c" style="left:916px;top:595px;width:84px;transform:none;font-weight:bold;font-family:'Liberation Serif',serif;font-size:13.5px;">-11.31</div>
<div class="a" style="left:20px;top:612px;width:985px;height:19px;background:#ececec;border-bottom:1px solid #d6d6d6;"></div><div class="vl" style="left:115px;top:612px;height:19px;"></div><div class="vl" style="left:280px;top:612px;height:19px;"></div><div class="vl" style="left:347px;top:612px;height:19px;"></div><div class="vl" style="left:399px;top:612px;height:19px;"></div><div class="vl" style="left:466px;top:612px;height:19px;"></div><div class="vl" style="left:541px;top:612px;height:19px;"></div><div class="vl" style="left:616px;top:612px;height:19px;"></div><div class="vl" style="left:691px;top:612px;height:19px;"></div><div class="vl" style="left:766px;top:612px;height:19px;"></div><div class="vl" style="left:916px;top:612px;height:19px;"></div><div class="a" style="left:468px;top:612px;width:72px;height:18px;background:#64f064;"></div><svg class="a" style="left:23px;top:613px" width="15" height="16" viewBox="0 0 15 16"><path d="M1.500 1.500h5.500l4 4v7q0 1-1 1h-7.500q-1 0-1-1v-10q0-1 1-1z" fill="#fff" stroke="#7d7d7d"/><path d="M3 13l7.500 0 0-7" fill="none" stroke="#e2e2e2" stroke-width="1.500"/><path d="M7 1.500v4h4" fill="#f4f4f4" stroke="#7d7d7d"/><path d="M2.500 14.500h8.500q1 0 1-1v-7.500" fill="none" stroke="#c8c8c8"/><circle cx="10.800" cy="12.200" r="3.200" fill="#ea4a1e" stroke="#9a3010" stroke-width="0.900"/><circle cx="10" cy="11.300" r="1.100" fill="#f8a080"/></svg><div class="c l" style="left:45px;top:615px;">28648916</div><div class="c" style="left:115px;top:615px;width:162px;">2010.12.10 13:28</div><div class="c" style="left:280px;top:615px;width:64px;">sell limit</div><div class="c" style="left:347px;top:615px;width:49px;">0.10</div><div class="c" style="left:399px;top:615px;width:64px;">eurusd</div><div class="c" style="left:466px;top:615px;width:72px;">1.3262</div><div class="c" style="left:541px;top:615px;width:72px;">0.0000</div><div class="c" style="left:616px;top:615px;width:72px;">0.0000</div><div class="c" style="left:691px;top:615px;width:72px;">1.3253</div>
<div class="a" style="left:20px;top:632px;width:985px;height:19px;background:#fff;border-bottom:1px solid #d6d6d6;"></div><div class="vl" style="left:115px;top:632px;height:19px;"></div><div class="vl" style="left:280px;top:632px;height:19px;"></div><div class="vl" style="left:347px;top:632px;height:19px;"></div><div class="vl" style="left:399px;top:632px;height:19px;"></div><div class="vl" style="left:466px;top:632px;height:19px;"></div><div class="vl" style="left:541px;top:632px;height:19px;"></div><div class="vl" style="left:616px;top:632px;height:19px;"></div><div class="vl" style="left:691px;top:632px;height:19px;"></div><div class="vl" style="left:766px;top:632px;height:19px;"></div><div class="vl" style="left:916px;top:632px;height:19px;"></div><svg class="a" style="left:23px;top:633px" width="15" height="16" viewBox="0 0 15 16"><path d="M1.500 1.500h5.500l4 4v7q0 1-1 1h-7.500q-1 0-1-1v-10q0-1 1-1z" fill="#fff" stroke="#7d7d7d"/><path d="M3 13l7.500 0 0-7" fill="none" stroke="#e2e2e2" stroke-width="1.500"/><path d="M7 1.500v4h4" fill="#f4f4f4" stroke="#7d7d7d"/><path d="M2.500 14.500h8.500q1 0 1-1v-7.500" fill="none" stroke="#c8c8c8"/><circle cx="10.800" cy="12.200" r="3.200" fill="#ea4a1e" stroke="#9a3010" stroke-width="0.900"/><circle cx="10" cy="11.300" r="1.100" fill="#f8a080"/></svg><div class="c l" style="left:45px;top:635px;">28648922</div><div class="c" style="left:115px;top:635px;width:162px;">2010.12.10 13:29</div><div class="c" style="left:280px;top:635px;width:64px;">sell limit</div><div class="c" style="left:347px;top:635px;width:49px;">0.10</div><div class="c" style="left:399px;top:635px;width:64px;">eurusd</div><div class="c" style="left:466px;top:635px;width:72px;">1.3272</div><div class="c" style="left:541px;top:635px;width:72px;">0.0000</div><div class="c" style="left:616px;top:635px;width:72px;">0.0000</div><div class="c" style="left:691px;top:635px;width:72px;">1.3253</div>
<div class="a" style="left:20px;top:652px;width:985px;height:19px;background:#ececec;border-bottom:1px solid #d6d6d6;"></div><div class="vl" style="left:115px;top:652px;height:19px;"></div><div class="vl" style="left:280px;top:652px;height:19px;"></div><div class="vl" style="left:347px;top:652px;height:19px;"></div><div class="vl" style="left:399px;top:652px;height:19px;"></div><div class="vl" style="left:466px;top:652px;height:19px;"></div><div class="vl" style="left:541px;top:652px;height:19px;"></div><div class="vl" style="left:616px;top:652px;height:19px;"></div><div class="vl" style="left:691px;top:652px;height:19px;"></div><div class="vl" style="left:766px;top:652px;height:19px;"></div><div class="vl" style="left:916px;top:652px;height:19px;"></div><svg class="a" style="left:23px;top:653px" width="15" height="16" viewBox="0 0 15 16"><path d="M1.500 1.500h5.500l4 4v7q0 1-1 1h-7.500q-1 0-1-1v-10q0-1 1-1z" fill="#fff" stroke="#7d7d7d"/><path d="M3 13l7.500 0 0-7" fill="none" stroke="#e2e2e2" stroke-width="1.500"/><path d="M7 1.500v4h4" fill="#f4f4f4" stroke="#7d7d7d"/><path d="M2.500 14.500h8.500q1 0 1-1v-7.500" fill="none" stroke="#c8c8c8"/><circle cx="10.800" cy="12.200" r="3.200" fill="#ea4a1e" stroke="#9a3010" stroke-width="0.900"/><circle cx="10" cy="11.300" r="1.100" fill="#f8a080"/></svg><div class="c l" style="left:45px;top:655px;">28648928</div><div class="c" style="left:115px;top:655px;width:162px;">2010.12.10 13:29</div><div class="c" style="left:280px;top:655px;width:64px;">sell limit</div><div class="c" style="left:347px;top:655px;width:49px;">0.10</div><div class="c" style="left:399px;top:655px;width:64px;">eurusd</div><div class="c" style="left:466px;top:655px;width:72px;">1.3282</div><div class="c" style="left:541px;top:655px;width:72px;">0.0000</div><div class="c" style="left:616px;top:655px;width:72px;">0.0000</div><div class="c" style="left:691px;top:655px;width:72px;">1.3253</div>
<div class="a" style="left:20px;top:672px;width:985px;height:19px;background:#fff;border-bottom:1px solid #d6d6d6;"></div><div class="vl" style="left:115px;top:672px;height:19px;"></div><div class="vl" style="left:280px;top:672px;height:19px;"></div><div class="vl" style="left:347px;top:672px;height:19px;"></div><div class="vl" style="left:399px;top:672px;height:19px;"></div><div class="vl" style="left:466px;top:672px;height:19px;"></div><div class="vl" style="left:541px;top:672px;height:19px;"></div><div class="vl" style="left:616px;top:672px;height:19px;"></div><div class="vl" style="left:691px;top:672px;height:19px;"></div><div class="vl" style="left:766px;top:672px;height:19px;"></div><div class="vl" style="left:916px;top:672px;height:19px;"></div><svg class="a" style="left:23px;top:673px" width="15" height="16" viewBox="0 0 15 16"><path d="M1.500 1.500h5.500l4 4v7q0 1-1 1h-7.500q-1 0-1-1v-10q0-1 1-1z" fill="#fff" stroke="#7d7d7d"/><path d="M3 13l7.500 0 0-7" fill="none" stroke="#e2e2e2" stroke-width="1.500"/><path d="M7 1.500v4h4" fill="#f4f4f4" stroke="#7d7d7d"/><path d="M2.500 14.500h8.500q1 0 1-1v-7.500" fill="none" stroke="#c8c8c8"/><circle cx="10.800" cy="12.200" r="3.200" fill="#ea4a1e" stroke="#9a3010" stroke-width="0.900"/><circle cx="10" cy="11.300" r="1.100" fill="#f8a080"/></svg><div class="c l" style="left:45px;top:675px;">28649058</div><div class="c" style="left:115px;top:675px;width:162px;">2010.12.10 13:31</div><div class="c" style="left:280px;top:675px;width:64px;">sell stop</div><div class="c" style="left:347px;top:675px;width:49px;">0.10</div><div class="c" style="left:399px;top:675px;width:64px;">eurusd</div><div class="c" style="left:466px;top:675px;width:72px;">1.3232</div><div class="c" style="left:541px;top:675px;width:72px;">0.0000</div><div class="c" style="left:616px;top:675px;width:72px;">0.0000</div><div class="c" style="left:691px;top:675px;width:72px;">1.3253</div>
<div class="a" style="left:20px;top:692px;width:985px;height:19px;background:#ececec;border-bottom:1px solid #d6d6d6;"></div><div class="vl" style="left:115px;top:692px;height:19px;"></div><div class="vl" style="left:280px;top:692px;height:19px;"></div><div class="vl" style="left:347px;top:692px;height:19px;"></div><div class="vl" style="left:399px;top:692px;height:19px;"></div><div class="vl" style="left:466px;top:692px;height:19px;"></div><div class="vl" style="left:541px;top:692px;height:19px;"></div><div class="vl" style="left:616px;top:692px;height:19px;"></div><div class="vl" style="left:691px;top:692px;height:19px;"></div><div class="vl" style="left:766px;top:692px;height:19px;"></div><div class="vl" style="left:916px;top:692px;height:19px;"></div><svg class="a" style="left:23px;top:693px" width="15" height="16" viewBox="0 0 15 16"><path d="M1.500 1.500h5.500l4 4v7q0 1-1 1h-7.500q-1 0-1-1v-10q0-1 1-1z" fill="#fff" stroke="#7d7d7d"/><path d="M3 13l7.500 0 0-7" fill="none" stroke="#e2e2e2" stroke-width="1.500"/><path d="M7 1.500v4h4" fill="#f4f4f4" stroke="#7d7d7d"/><path d="M2.500 14.500h8.500q1 0 1-1v-7.500" fill="none" stroke="#c8c8c8"/><circle cx="10.800" cy="12.200" r="3.200" fill="#ea4a1e" stroke="#9a3010" stroke-width="0.900"/><circle cx="10" cy="11.300" r="1.100" fill="#f8a080"/></svg><div class="c l" style="left:45px;top:695px;">28649073</div><div class="c" style="left:115px;top:695px;width:162px;">2010.12.10 13:31</div><div class="c" style="left:280px;top:695px;width:64px;">sell stop</div><div class="c" style="left:347px;top:695px;width:49px;">0.10</div><div class="c" style="left:399px;top:695px;width:64px;">eurusd</div><div class="c" style="left:466px;top:695px;width:72px;">1.3212</div><div class="c" style="left:541px;top:695px;width:72px;">0.0000</div><div class="c" style="left:616px;top:695px;width:72px;">0.0000</div><div class="c" style="left:691px;top:695px;width:72px;">1.3253</div>
<div class="a" style="left:20px;top:712px;width:985px;height:4px;background:#fff;border-bottom:1px solid #d6d6d6;"></div><div class="vl" style="left:115px;top:712px;height:4px;"></div><div class="vl" style="left:280px;top:712px;height:4px;"></div><div class="vl" style="left:347px;top:712px;height:4px;"></div><div class="vl" style="left:399px;top:712px;height:4px;"></div><div class="vl" style="left:466px;top:712px;height:4px;"></div><div class="vl" style="left:541px;top:712px;height:4px;"></div><div class="vl" style="left:616px;top:712px;height:4px;"></div><div class="vl" style="left:691px;top:712px;height:4px;"></div><div class="vl" style="left:766px;top:712px;height:4px;"></div><div class="vl" style="left:916px;top:712px;height:4px;"></div><div class="a" style="left:23px;top:714px;width:15px;height:2px;overflow:hidden;"><svg width="15" height="16" viewBox="0 0 15 16" style="position:absolute;left:0;top:0"><path d="M1.500 1.500h6.500l3.500 3.500v8.500h-10z" fill="#fff" stroke="#4d4d4d"/></svg></div>
<div class="a" style="left:19px;top:716px;width:1005px;height:1px;background:#000;"></div>
<div class="a" style="left:1024px;top:530px;width:1px;height:187px;background:#fff;"></div>
<div class="a" style="left:1005px;top:531px;width:19px;height:185px;background:#f3f1ec;"></div>
<div class="a" style="left:1006px;top:532px;width:18px;height:17px;box-sizing:border-box;border:1px solid #fff;border-radius:3px;background:linear-gradient(135deg,#cbd9fb,#b7caf5);"></div><svg class="a" style="left:1006px;top:532px" width="17" height="17"><path d="M4.500 10.500l4-4 4 4" fill="none" stroke="#4d6185" stroke-width="2"/></svg>
<div class="a" style="left:1006px;top:551px;width:18px;height:130px;box-sizing:border-box;border:1px solid #fff;border-radius:3px;background:linear-gradient(to right,#c9d7fc,#bccdf8 60%,#aebff0);box-shadow:inset -1px -1px 0 #98b0e8;"></div><div class="a" style="left:1011px;top:611px;width:7px;height:1px;background:#eef3fe;box-shadow:0 1px 0 #8ca6e0;"></div><div class="a" style="left:1011px;top:613px;width:7px;height:1px;background:#eef3fe;box-shadow:0 1px 0 #8ca6e0;"></div><div class="a" style="left:1011px;top:615px;width:7px;height:1px;background:#eef3fe;box-shadow:0 1px 0 #8ca6e0;"></div><div class="a" style="left:1011px;top:617px;width:7px;height:1px;background:#eef3fe;box-shadow:0 1px 0 #8ca6e0;"></div>
<div class="a" style="left:1006px;top:698px;width:18px;height:17px;box-sizing:border-box;border:1px solid #fff;border-radius:3px;background:linear-gradient(135deg,#cbd9fb,#b7caf5);"></div><svg class="a" style="left:1006px;top:698px" width="17" height="17"><path d="M4.500 6.500l4 4 4-4" fill="none" stroke="#4d6185" stroke-width="2"/></svg>
<div class="a" style="left:19px;top:530px;width:1006px;height:1px;background:#b4b1a2;"></div>
<div class="a" style="left:19px;top:717px;width:1px;height:20px;background:#fff;"></div>
<div class="a" style="left:19px;top:736px;width:1007px;height:1px;background:#fff;"></div>
<div class="a" style="left:1025px;top:528px;width:1px;height:209px;background:#fff;"></div>
<div class="a" style="left:22px;top:716px;width:80px;height:19px;background:#fff;box-sizing:border-box;border:1px solid #000;border-top:none;border-right-width:1px;"></div>
<div class="btab" style="left:31px;color:#000;letter-spacing:-0.14px;">Operaciones</div>
<div class="btab" style="left:111px;letter-spacing:-0.05px;">Historial de cuentas</div><div class="btab" style="left:225px;letter-spacing:-0.38px;">Noticias</div><div class="btab" style="left:282px;letter-spacing:-0.36px;">Avisos</div><div class="btab" style="left:333px;letter-spacing:-0.28px;">Buzón</div><div class="btab" style="left:382px;letter-spacing:-0.33px;">Diario</div>
<div class="bsep" style="left:216px;"></div><div class="bsep" style="left:272px;"></div><div class="bsep" style="left:324px;"></div><div class="bsep" style="left:373px;"></div><div class="bsep" style="left:420px;"></div>
<div class="a" style="left:4px;top:739px;width:1023px;height:1px;background:#aca899;"></div>
<div class="a" style="left:4px;top:740px;width:1023px;height:1px;background:#fff;"></div>
<div class="t" style="left:5px;top:746px;letter-spacing:-0.07px;">Para obtener ayuda, pulse F1</div>
<div class="t" style="left:209px;top:746px;letter-spacing:-0.24px;">Default</div>
<div class="t" style="left:920px;top:746px;">522/4 kb</div>
<div class="ssep" style="left:204px;"></div><div class="ssep" style="left:336px;"></div><div class="ssep" style="left:455px;"></div><div class="ssep" style="left:539px;"></div><div class="ssep" style="left:622px;"></div><div class="ssep" style="left:703px;"></div><div class="ssep" style="left:786px;"></div><div class="ssep" style="left:866px;"></div>
<svg class="a" style="left:872px;top:746px" width="24" height="12" shape-rendering="crispEdges"><rect x="0" y="0" width="2" height="12" fill="#5c7c14"/><rect x="0" y="10" width="2" height="2" fill="#10385c"/><rect x="3" y="0" width="2" height="12" fill="#5c7c14"/><rect x="3" y="9" width="2" height="3" fill="#10385c"/><rect x="6" y="0" width="2" height="12" fill="#5c7c14"/><rect x="6" y="8" width="2" height="4" fill="#10385c"/><rect x="9" y="0" width="2" height="12" fill="#5c7c14"/><rect x="9" y="6" width="2" height="6" fill="#10385c"/><rect x="12" y="0" width="2" height="12" fill="#5c7c14"/><rect x="12" y="5" width="2" height="7" fill="#10385c"/><rect x="15" y="0" width="2" height="12" fill="#5c7c14"/><rect x="15" y="4" width="2" height="8" fill="#10385c"/><rect x="18" y="0" width="2" height="12" fill="#5c7c14"/><rect x="18" y="3" width="2" height="9" fill="#10385c"/><rect x="21" y="0" width="2" height="12" fill="#5c7c14"/><rect x="21" y="2" width="2" height="10" fill="#10385c"/></svg>
<svg class="a" style="left:1011px;top:745px" width="16" height="16"><path d="M16 2l-14 14M16 6l-10 10M16 10l-6 6" stroke="#aca899" stroke-width="1.400"/><path d="M16 3.300l-12.700 12.700M16 7.300l-8.700 8.700M16 11.300l-4.700 4.700" stroke="#fff" stroke-width="1"/></svg>
</div>
</body></html>
